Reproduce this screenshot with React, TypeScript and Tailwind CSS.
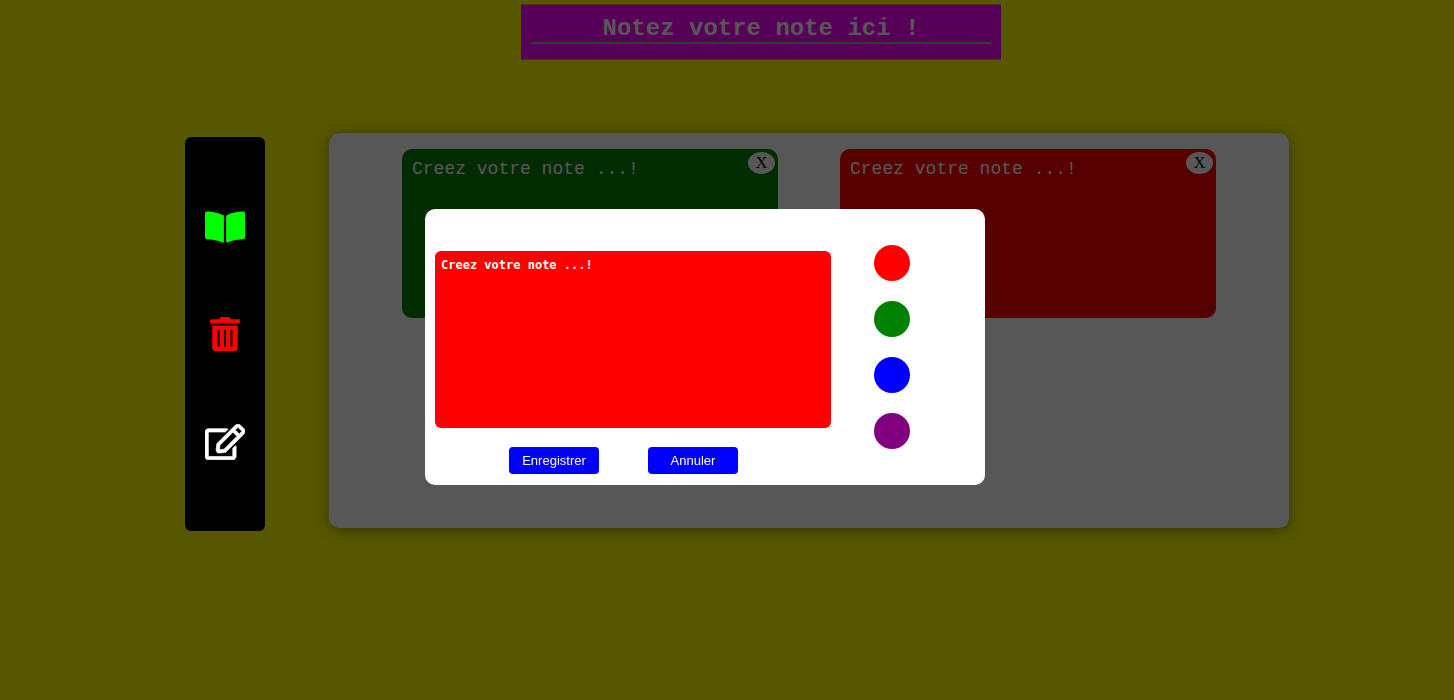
import { useState } from "react";
import { FaBookOpen, FaRegEdit, FaTrashAlt } from "react-icons/fa";

const PLACEHOLDER = "Creez votre note ...!";

const swatches = [
  { name: "Rouge", fill: "bg-[#ff0000]" },
  { name: "Vert", fill: "bg-[#008000]" },
  { name: "Bleu", fill: "bg-[#0000ff]" },
  { name: "Violet", fill: "bg-[#800080]" },
];

const notes = [
  { id: 1, fill: "bg-[#008000]" },
  { id: 2, fill: "bg-[#ff0000]" },
];

function Note({ fill }: { fill: string }) {
  return (
    <article className={`relative h-[169px] rounded-[10px] p-[10px] text-white ${fill}`}>
      <p className="text-[18px] leading-5">{PLACEHOLDER}</p>
      <button
        type="button"
        aria-label="Supprimer la note"
        className="absolute top-[3px] right-[3px] flex h-[22px] w-[27px] items-center justify-center rounded-[50%] bg-white font-['Liberation_Serif',serif] text-[16px] leading-5 text-black"
      >
        X
      </button>
    </article>
  );
}

function Toolbar() {
  return (
    <nav className="relative z-20 mt-1 flex h-[394px] w-20 shrink-0 flex-col items-center justify-evenly rounded-md bg-black">
      <button type="button" aria-label="Lire" className="flex h-9 items-center text-[#00ff00]">
        <FaBookOpen className="h-9 w-10" />
      </button>
      <button type="button" aria-label="Supprimer" className="flex h-9 items-center text-[#ff0000]">
        <FaTrashAlt className="h-[34px] w-10" />
      </button>
      <button type="button" aria-label="Nouvelle note" className="flex h-9 items-center text-white">
        <FaRegEdit className="h-9 w-10 [stroke-width:10]" />
      </button>
    </nav>
  );
}

function NoteDialog() {
  const [fill, setFill] = useState(swatches[0].fill);

  return (
    <div className="fixed inset-0 z-10 flex items-start justify-center bg-black/66 pt-[209px] pr-11">
      <form
        role="dialog"
        aria-label="Nouvelle note"
        className="flex h-[276px] w-[560px] rounded-[10px] bg-white pl-[10px]"
      >
        <div className="flex w-[396px] flex-col pt-[42px]">
          <textarea
            aria-label="Note"
            placeholder={PLACEHOLDER}
            className={`h-[177px] resize-none rounded-md px-[6px] py-[5px] font-['DejaVu_Sans_Mono',monospace] text-[12px] leading-[18px] font-bold text-white outline-none placeholder:text-white ${fill}`}
          />
          <div className="mt-[19px] flex justify-center gap-[49px] pr-[19px] font-['Liberation_Sans',sans-serif] text-[13px] text-white">
            <button type="button" className="h-[27px] w-[90px] rounded bg-[#0000ff]">
              Enregistrer
            </button>
            <button type="button" className="h-[27px] w-[90px] rounded bg-[#0000ff]">
              Annuler
            </button>
          </div>
        </div>
        <div className="flex flex-col gap-5 pt-9 pl-[43px]">
          {swatches.map((s) => (
            <input
              key={s.name}
              type="radio"
              name="couleur"
              aria-label={s.name}
              checked={fill === s.fill}
              onChange={() => setFill(s.fill)}
              className={`size-9 appearance-none rounded-full ${s.fill}`}
            />
          ))}
        </div>
      </form>
    </div>
  );
}

export default function App() {
  return (
    <div className="min-h-screen bg-[#ffff00] pt-1 font-['Liberation_Mono',monospace]">
      <header className="flex justify-center pl-[68px]">
        <div className="h-14 w-[480px] border-y border-[#ff8080] bg-[#ff00ff] px-[10px] pt-[10px]">
          <h1 className="border-b-2 border-[#96b096] text-center text-[24px] leading-[27px] font-bold text-white">
            Notez votre note ici !
          </h1>
        </div>
      </header>
      <main className="mt-[73px] flex items-start gap-16 pr-[165px] pl-[185px]">
        <Toolbar />
        <section className="grid h-[395px] flex-1 grid-cols-2 content-start gap-[62px] rounded-[10px] bg-white px-[73px] pt-4 shadow-[0_2px_16px_rgba(0,0,0,0.4)]">
          {notes.map((n) => (
            <Note key={n.id} fill={n.fill} />
          ))}
        </section>
      </main>
      <NoteDialog />
    </div>
  );
}
